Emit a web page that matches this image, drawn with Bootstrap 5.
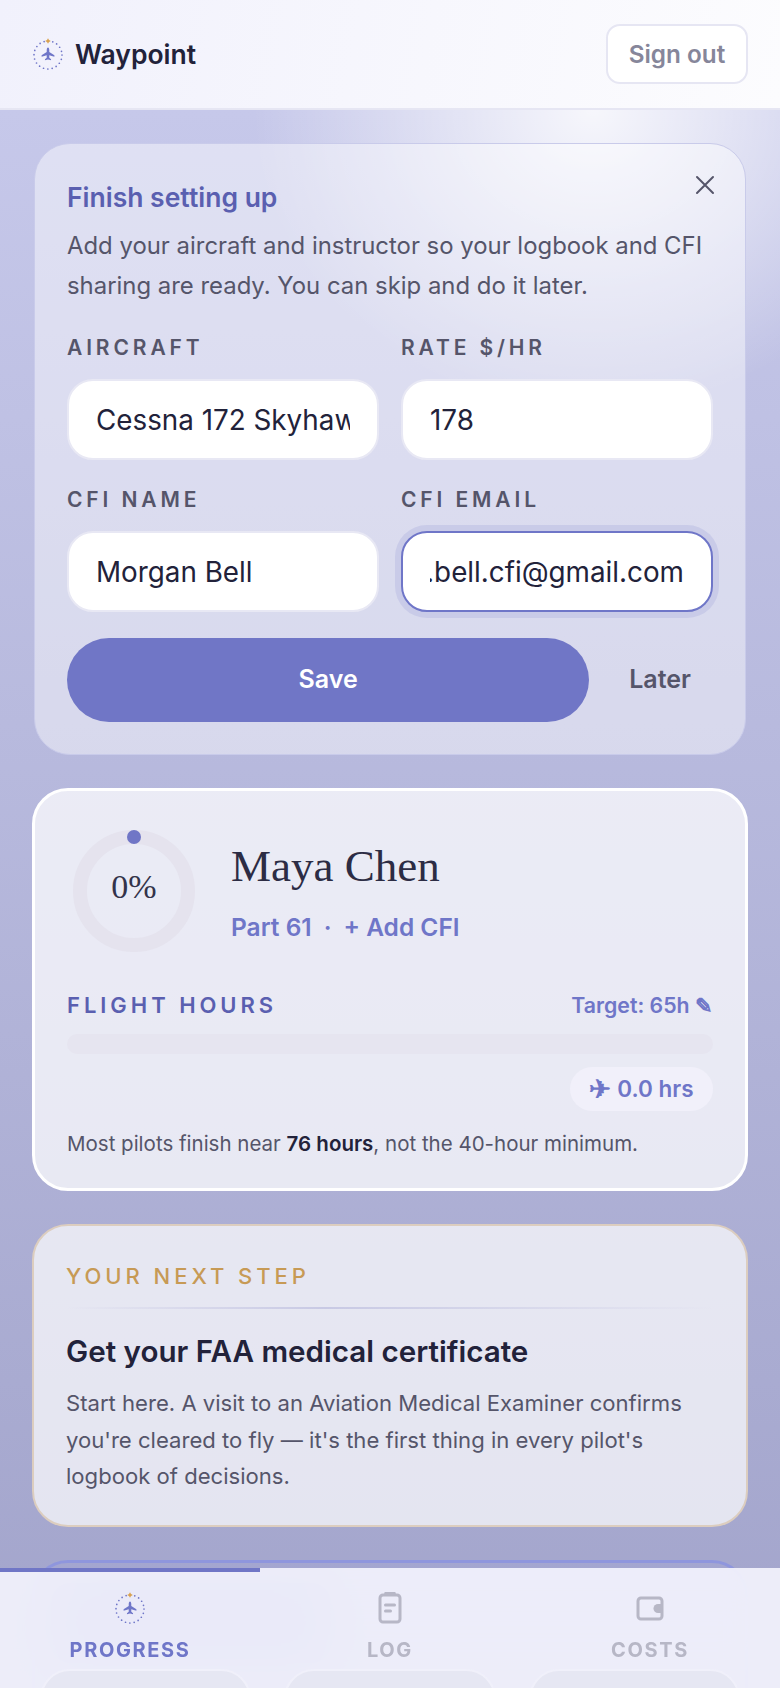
<!DOCTYPE html>
<html lang="en">
  <head>
    <meta charset="UTF-8" />
    <meta name="viewport" content="width=device-width, initial-scale=1.0" />
    <title>Waypoint</title>
    <link href="https://cdn.jsdelivr.net/npm/bootstrap@5.3.3/dist/css/bootstrap.min.css" rel="stylesheet" />
    <style>
      body {
        font-family: Inter, "Liberation Sans", sans-serif;
        color: #22223a;
        height: 100vh;
        overflow: hidden;
      }

      .wp-header {
        height: 110px;
        flex: none;
        padding: 0 32px 0 33px;
        background: linear-gradient(100deg, #f1f1fc, #fcfcfe);
        border-bottom: 2px solid #e6e6f3;
      }

      .wp-brand {
        font-size: 26.5px;
        font-weight: 600;
        gap: 12px;
      }

      .wp-brand span {
        padding-top: 2px;
      }

      .wp-signout {
        width: 142px;
        height: 60px;
        padding: 0;
        font-size: 24.3px;
        font-weight: 600;
        color: #86869a;
        background: #fff;
        border: 2px solid #e6e6f3;
        border-radius: 14px;
      }

      .wp-main {
        min-height: 0;
        padding: 33px 32px;
        gap: 33px;
        background:
          radial-gradient(ellipse 340px 300px at 76% 0, rgba(255, 255, 255, 0.85), rgba(255, 255, 255, 0)),
          linear-gradient(180deg, #c6c8ea, #a2a4cb);
      }

      .wp-panel {
        flex: none;
        border-radius: 36px;
        padding: 32px;
      }

      .wp-setup {
        margin: 0 2px;
        border: 1px solid #c9cbea;
        background: rgba(255, 255, 255, 0.45);
        height: 612px;
        padding-top: 31px;
      }

      .wp-setup-title {
        font-size: 26.5px;
        font-weight: 600;
        line-height: 44px;
        color: #5a5fb0;
        margin-bottom: 7px;
      }

      .wp-setup-text {
        font-size: 23.9px;
        line-height: 40px;
        color: #55556a;
        margin-bottom: 30px;
      }

      .wp-close {
        top: 27px;
        right: 29px;
        width: 22px;
        height: 22px;
        padding: 0;
        border: 0;
        background: none;
      }

      .wp-fields {
        --bs-gutter-x: 22px;
        --bs-gutter-y: 28px;
      }

      .wp-label {
        font-size: 21px;
        font-weight: 600;
        line-height: 24px;
        letter-spacing: 0.185em;
        color: #55556a;
        margin-bottom: 19px;
      }

      .wp-input {
        height: 81px;
        padding: 0 27px;
        font-size: 27.8px;
        color: #22223a;
        border: 2px solid #e8e8f4;
        border-radius: 26px;
        background: #fff;
      }

      .wp-input-on {
        border-color: #6f76c8;
        box-shadow: 0 0 0 6px #c9cbe8;
      }

      .wp-actions {
        margin-top: 26px;
      }

      .wp-save {
        height: 84px;
        font-size: 25px;
        font-weight: 600;
        color: #fff;
        background: #7076c6;
        border: 0;
        border-radius: 42px;
      }

      .wp-later {
        padding: 0 22px 0 40px;
        font-size: 25px;
        font-weight: 600;
        color: #55556a;
        border: 0;
        background: none;
      }

      .wp-profile {
        border: 3px solid #fff;
        background: rgba(255, 255, 255, 0.72);
        height: 403px;
      }

      .wp-ring {
        flex: none;
        width: 122px;
        height: 122px;
        margin: 7px 36px 0 6px;
      }

      .wp-ring-num {
        font-family: "Liberation Serif", serif;
        font-size: 34px;
        padding-bottom: 10px;
        color: #33334a;
      }

      .wp-name {
        font-family: "Liberation Serif", serif;
        font-size: 45px;
        line-height: 56px;
        margin: 15px 0 18px;
        color: #2c2c44;
      }

      .wp-meta {
        font-size: 24.5px;
        font-weight: 600;
        line-height: 30px;
        color: #6f76c8;
      }

      .wp-meta-dot {
        margin: 0 12px;
      }

      .wp-hours {
        margin-top: 41px;
        line-height: 24px;
      }

      .wp-hours-label {
        font-size: 22px;
        font-weight: 600;
        letter-spacing: 0.18em;
        color: #5a5fb0;
      }

      .wp-target {
        font-size: 21.3px;
        font-weight: 600;
        color: #6f76c8;
      }

      .wp-bar {
        height: 20px;
        margin-top: 17px;
        border-radius: 10px;
        background: #e6e5f0;
      }

      .wp-pill {
        width: 143px;
        height: 44px;
        margin-top: 13px;
        gap: 6px;
        font-size: 22.5px;
        font-weight: 600;
        color: #6f76c8;
        background: #f1f0fa;
        border-radius: 22px;
      }

      .wp-plane {
        font-size: 26px;
        line-height: 1;
      }

      .wp-note {
        font-size: 20.5px;
        line-height: 28px;
        color: #55556a;
        margin: 19px 0 0;
      }

      .wp-note b {
        font-weight: 600;
        color: #22223a;
      }

      .wp-step {
        height: 303px;
        padding-top: 38px;
        border: 2px solid #dccdbf;
        background: rgba(255, 255, 255, 0.7);
      }

      .wp-step-label {
        font-size: 22px;
        font-weight: 500;
        line-height: 24px;
        letter-spacing: 0.18em;
        color: #c79a55;
      }

      .wp-step-rule {
        height: 2px;
        margin: 19px 0 24px;
        background: linear-gradient(90deg, rgba(200, 201, 228, 0), #c8c9e4 40%, rgba(200, 201, 228, 0));
      }

      .wp-step-title {
        font-size: 29.6px;
        font-weight: 600;
        line-height: 36px;
        margin-bottom: 16px;
      }

      .wp-step-text {
        font-size: 22.1px;
        line-height: 36.5px;
        color: #55556a;
        margin: 0;
      }

      .wp-next {
        height: 300px;
        padding: 20px 16px;
        border: 3px solid #8f96dd;
        background: rgba(160, 165, 220, 0.2);
      }

      .wp-next-fill {
        width: 280px;
        height: 80px;
        border-radius: 20px;
        background: #6f76c8;
      }

      .wp-tabs {
        height: 120px;
        overflow: hidden;
        background: rgba(241, 241, 252, 0.94);
        backdrop-filter: blur(24px);
      }

      .wp-tabs-line {
        width: 260px;
        height: 4px;
        background: #7076c6;
      }

      .wp-tab {
        height: 97px;
        padding-top: 20px;
        font-size: 20px;
        font-weight: 700;
        line-height: 24px;
        letter-spacing: 0.08em;
        color: #b7b7c6;
      }

      .wp-tab svg {
        display: block;
        margin-bottom: 14px;
      }

      .wp-tab-on {
        color: #6f76c8;
      }

      .wp-tiles {
        padding: 0 40px;
        gap: 33px;
      }

      .wp-tile {
        height: 60px;
        border: 2px solid #f0f0fa;
        border-radius: 40px;
        background: #e6e7f3;
      }
    </style>
  </head>
  <body class="d-flex flex-column">
    <svg width="0" height="0" class="position-absolute">
      <symbol id="wp-mark" viewBox="3 3 30 32">
        <circle cx="18" cy="20" r="14" fill="none" stroke="#6f76c8" stroke-width="1.7" stroke-linecap="round" stroke-dasharray="0 4.4" />
        <path d="M18 3.2 19 5 20.8 6 19 7 18 8.8 17 7 15.2 6 17 5Z" fill="#d9a24f" />
        <path transform="translate(3.6 4) scale(.8)" d="M18 10.5c1 0 1.6 1.6 1.6 3.5v2.2l6.4 4v2l-6.4-2v3.3l2.2 1.7v1.5L18 25.5l-3.8 1.2v-1.5l2.2-1.7V20.2L10 22.2v-2l6.4-4V14c0-1.9.6-3.5 1.6-3.5Z" fill="#6f76c8" />
      </symbol>
    </svg>

    <header class="wp-header d-flex align-items-center justify-content-between">
      <div class="wp-brand d-flex align-items-center">
        <svg width="30" height="32"><use href="#wp-mark" /></svg>
        <span>Waypoint</span>
      </div>
      <button class="wp-signout" type="button">Sign out</button>
    </header>

    <main class="wp-main flex-grow-1 d-flex flex-column overflow-hidden">
      <section class="wp-panel wp-setup position-relative">
        <button class="wp-close position-absolute" type="button" aria-label="Close">
          <svg width="22" height="22" viewBox="0 0 22 22" fill="none" stroke="#55556a" stroke-width="2" stroke-linecap="round">
            <path d="M3 3l16 16M19 3 3 19" />
          </svg>
        </button>
        <div class="wp-setup-title">Finish setting up</div>
        <p class="wp-setup-text">Add your aircraft and instructor so your logbook and CFI sharing are ready. You can skip and do it later.</p>
        <div class="row wp-fields">
          <div class="col-6">
            <label class="wp-label d-block">AIRCRAFT</label>
            <input class="form-control wp-input" value="Cessna 172 Skyhawk" />
          </div>
          <div class="col-6">
            <label class="wp-label d-block">RATE $/HR</label>
            <input class="form-control wp-input" value="178" />
          </div>
          <div class="col-6">
            <label class="wp-label d-block">CFI NAME</label>
            <input class="form-control wp-input" value="Morgan Bell" />
          </div>
          <div class="col-6">
            <label class="wp-label d-block">CFI EMAIL</label>
            <input id="cfiEmail" class="form-control wp-input wp-input-on" value="morgan.bell.cfi@gmail.com" />
          </div>
        </div>
        <div class="wp-actions d-flex align-items-center">
          <button class="wp-save flex-grow-1" type="button">Save</button>
          <button class="wp-later" type="button">Later</button>
        </div>
      </section>

      <section class="wp-panel wp-profile">
        <div class="d-flex">
          <div class="wp-ring position-relative">
            <svg width="122" height="122" viewBox="0 0 122 122">
              <circle cx="61" cy="61" r="54" fill="none" stroke="#e5e3ee" stroke-width="14" />
              <circle cx="61" cy="7" r="7" fill="#7076c6" />
            </svg>
            <div class="wp-ring-num position-absolute top-0 start-0 w-100 h-100 d-flex align-items-center justify-content-center">0%</div>
          </div>
          <div>
            <div class="wp-name">Maya Chen</div>
            <div class="wp-meta">Part 61<span class="wp-meta-dot">·</span>+ Add CFI</div>
          </div>
        </div>
        <div class="wp-hours d-flex justify-content-between align-items-center">
          <span class="wp-hours-label">FLIGHT HOURS</span>
          <span class="wp-target">Target: 65h ✎</span>
        </div>
        <div class="wp-bar"></div>
        <div class="d-flex justify-content-end">
          <div class="wp-pill d-flex align-items-center justify-content-center"><span class="wp-plane">✈</span>0.0 hrs</div>
        </div>
        <p class="wp-note">Most pilots finish near <b>76 hours</b>, not the 40-hour minimum.</p>
      </section>

      <section class="wp-panel wp-step">
        <div class="wp-step-label">YOUR NEXT STEP</div>
        <div class="wp-step-rule"></div>
        <div class="wp-step-title">Get your FAA medical certificate</div>
        <p class="wp-step-text">Start here. A visit to an Aviation Medical Examiner confirms you're cleared to fly — it's the first thing in every pilot's logbook of decisions.</p>
      </section>

      <section class="wp-panel wp-next">
        <div class="wp-next-fill"></div>
      </section>
    </main>

    <nav class="wp-tabs position-fixed bottom-0 start-0 end-0">
      <div class="wp-tabs-line"></div>
      <div class="row g-0">
        <div class="col-4 wp-tab wp-tab-on d-flex flex-column align-items-center">
          <svg width="30" height="32"><use href="#wp-mark" /></svg>
          PROGRESS
        </div>
        <div class="col-4 wp-tab d-flex flex-column align-items-center">
          <svg width="30" height="32" viewBox="3 3 30 32" fill="none" stroke="#b7b7c6" stroke-width="3" stroke-linecap="round" stroke-linejoin="round">
            <rect x="8" y="6" width="20" height="27" rx="3" />
            <path d="M14 4.5h8" stroke-width="3.5" />
            <path d="M13.5 16h9M13.5 22h5" />
          </svg>
          LOG
        </div>
        <div class="col-4 wp-tab d-flex flex-column align-items-center">
          <svg width="30" height="32" viewBox="3 3 30 32" fill="none" stroke="#b7b7c6" stroke-width="3" stroke-linejoin="round">
            <rect x="6" y="9" width="24" height="21" rx="3" />
            <path d="M30 15h-4a4.5 4.5 0 0 0 0 9h4Z" fill="#b7b7c6" stroke="none" />
          </svg>
          COSTS
        </div>
      </div>
      <div class="wp-tiles d-flex">
        <div class="wp-tile flex-fill"></div>
        <div class="wp-tile flex-fill"></div>
        <div class="wp-tile flex-fill"></div>
      </div>
    </nav>

    <script src="https://cdn.jsdelivr.net/npm/bootstrap@5.3.3/dist/js/bootstrap.bundle.min.js"></script>
    <script>
      // email field was scrolled to its end in the shot
      const cfiEmail = document.getElementById("cfiEmail");
      cfiEmail.scrollLeft = cfiEmail.scrollWidth;
    </script>
  </body>
</html>
